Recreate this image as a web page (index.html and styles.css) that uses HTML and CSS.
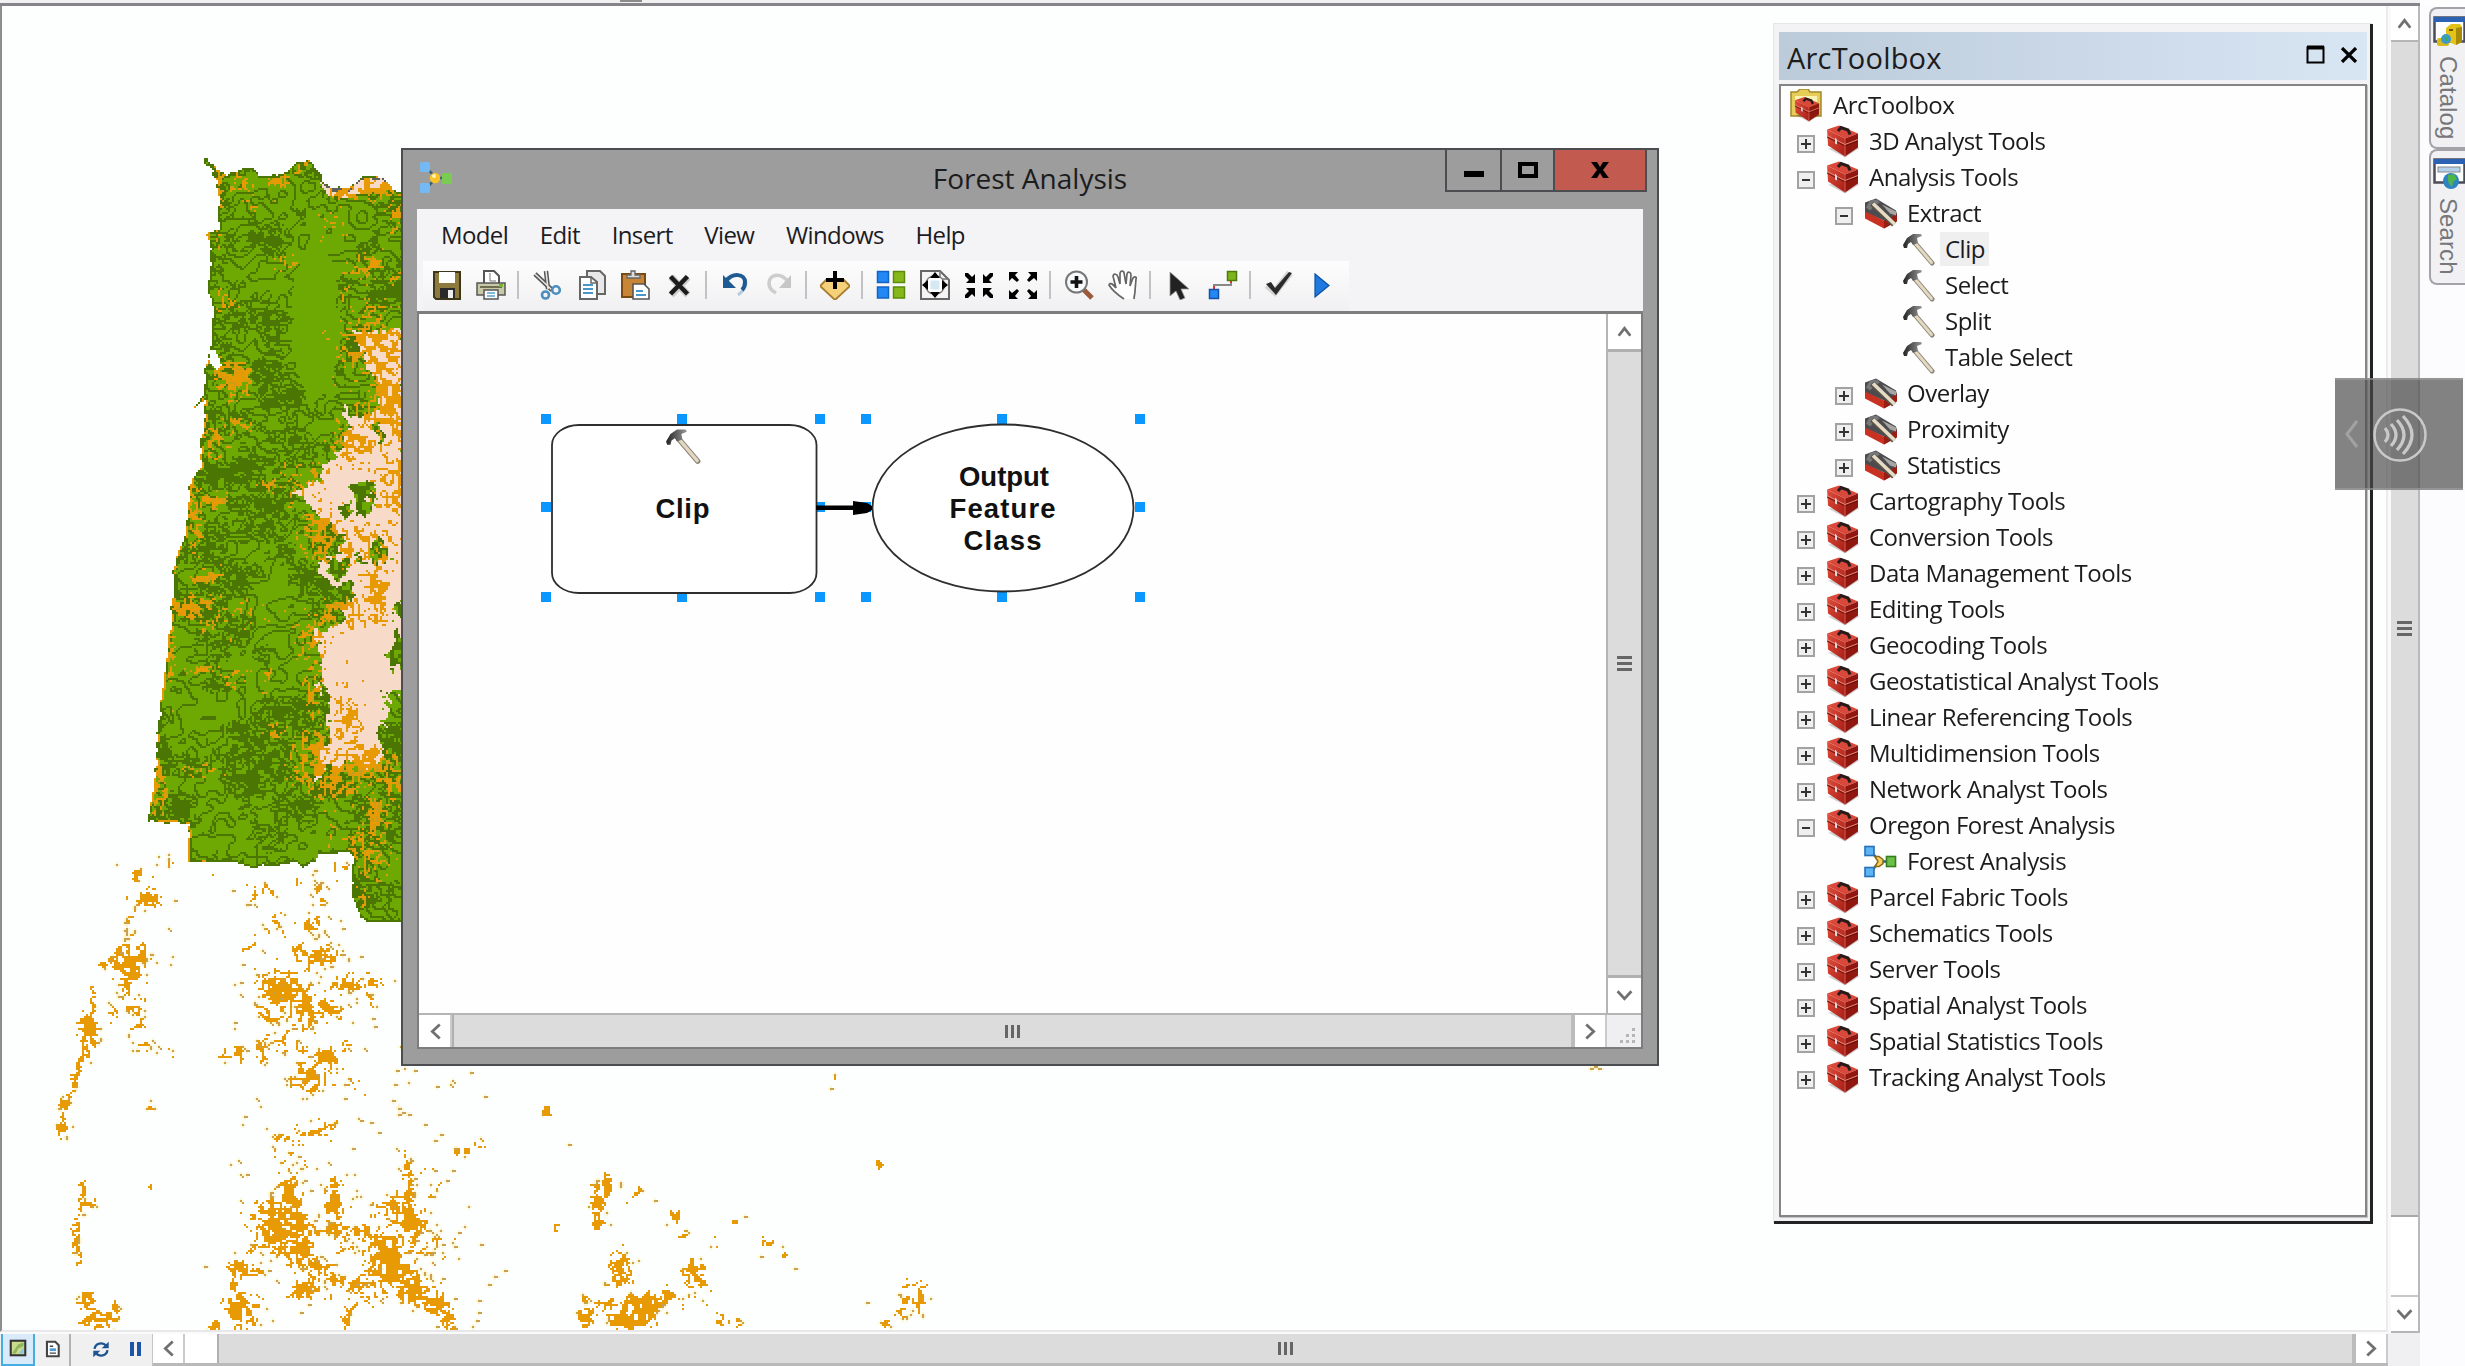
FILE: index.html
```html
<!DOCTYPE html>
<html lang="en">
<head>
<meta charset="utf-8">
<title>Forest Analysis</title>
<link rel="stylesheet" href="styles.css">
</head>
<body>
<svg class="defs" width="0" height="0" aria-hidden="true">
  <defs>
    <linearGradient id="gRed" x1="0" y1="0" x2="1" y2="1"><stop offset="0" stop-color="#e0503f"/><stop offset="1" stop-color="#a81c14"/></linearGradient>
    <linearGradient id="gSteel" x1="0" y1="0" x2="1" y2="0"><stop offset="0" stop-color="#222"/><stop offset="1" stop-color="#999"/></linearGradient>
    <symbol id="toolbox" viewBox="0 0 33 32">
      <path d="M2 23 19 32 33 23 31 20Z" fill="#000" opacity=".18"/>
      <path d="M1 4 13 0 32 8 19 13Z" fill="#d8493b"/>
      <path d="M1 4 19 13V31L2 20Z" fill="url(#gRed)"/>
      <path d="M32 8 19 13V31L32 22Z" fill="#8f1710"/>
      <path d="M1 10 19 19 32 14" fill="none" stroke="#e58a7c" stroke-width="1"/>
      <path d="M1 11.500 19 20.500 32 15.500" fill="none" stroke="#6a0f0a" stroke-width="1"/>
      <path d="M19 13V31" stroke="#d9705f" stroke-width=".8"/>
      <path d="M12 5.500 15 2 22 4.500 24 9" fill="none" stroke="#2a1a1a" stroke-width="3"/>
      <path d="M9 12v6l2 1v-5z" fill="#ddd"/>
    </symbol>
    <symbol id="toolset" viewBox="0 0 33 32">
      <path d="M1 13 20 23 33 16 32 24 20 31 1 21Z" fill="#c93223"/>
      <path d="M20 23 33 16V24L20 31Z" fill="#9a1c13"/>
      <path d="M1 14 1 5 12 1 32 13 33 17 20 23Z" fill="#4c4c4f"/>
      <path d="M18 7 32 14v4l-6-2z" fill="#a9a5a2"/>
      <path d="M2 10 6 3l7-1 3 3-4 2-6 6z" fill="#77777a"/>
      <path d="M8 6 30 27" stroke="#5a5248" stroke-width="5.500"/>
      <path d="M9 6 31 27" stroke="#e6dcc6" stroke-width="3.600"/>
    </symbol>
    <symbol id="hammer" viewBox="0 0 33 33">
      <path d="M13 10 30 30" stroke="#8b847c" stroke-width="5" stroke-linecap="round"/>
      <path d="M13 10 29.500 29.500" stroke="#e3d8bf" stroke-width="3" stroke-linecap="round"/>
      <path d="M1 12 5 5 11 1 19 1 20 3 15 5 16 10 11 12 9 9 6 11 5 15 2 15Z" fill="url(#gSteel)"/>
    </symbol>
    <symbol id="model" viewBox="0 0 33 32">
      <path d="M7 6 14 14M7 26 14 18M18 16h6" stroke="#236a80" stroke-width="2.500"/>
      <rect x="1" y="1" width="9" height="9" fill="#5db4f2" stroke="#2770b8" stroke-width="1.600"/>
      <rect x="1" y="22" width="9" height="9" fill="#5db4f2" stroke="#2770b8" stroke-width="1.600"/>
      <path d="M11 11h4l4 3v4l-4 3h-4l3-5z" fill="#f7cf5a" stroke="#8a6a1a" stroke-width="1.500"/>
      <rect x="22.500" y="11" width="9" height="10" fill="#6cc04a" stroke="#377d1c" stroke-width="1.600"/>
    </symbol>
    <symbol id="modelsoft" viewBox="0 0 33 32">
      <path d="M7 6 14 14M7 26 14 18M18 16h6" stroke="#3a6070" stroke-width="2.500"/>
      <rect x="0" y="0" width="10" height="10" rx="1.500" fill="#73b9f3"/>
      <rect x="0" y="21" width="10" height="10" rx="1.500" fill="#73b9f3"/>
      <circle cx="15" cy="16" r="5.200" fill="#f8c328"/>
      <circle cx="14" cy="14" r="2" fill="#fff3b8"/>
      <rect x="22" y="11" width="10" height="11" rx="1.500" fill="#7acb54"/>
    </symbol>
    <symbol id="up" viewBox="0 0 16 16"><path d="M2.500 12 8 5l5.500 7" fill="none" stroke="#707070" stroke-width="2.600"/></symbol>
    <symbol id="down" viewBox="0 0 16 16"><path d="M1.500 4 8 11l6.500-7" fill="none" stroke="#707070" stroke-width="2.600"/></symbol>
    <symbol id="left" viewBox="0 0 16 16"><path d="M12 1.500 5 8l7 6.500" fill="none" stroke="#707070" stroke-width="2.600"/></symbol>
    <symbol id="right" viewBox="0 0 16 16"><path d="M4 1.500 11 8l-7 6.500" fill="none" stroke="#707070" stroke-width="2.600"/></symbol>
  </defs>
</svg>

<div class="app">
  <div class="topstrip"><span class="topmark"></span></div>
  <div class="workspace">
    <div class="mapcol">
      <main class="mapview">
        <canvas id="map" class="map" width="1193" height="663"></canvas>
      </main>
      <footer class="statusbar">
        <div class="viewbtn viewbtn-on"><svg width="18" height="18" viewBox="0 0 26 26"><rect x="2.500" y="2.500" width="21" height="21" fill="#c9dc8c" stroke="#333" stroke-width="3"/><path d="M5 20 13 8l8-3v5l-8 4-3 7H5z" fill="#8fb65a"/><path d="M14 21 21 12v9z" fill="#8cc5e8"/></svg></div>
        <div class="viewbtn"><svg width="17" height="18" viewBox="0 0 24 26"><path d="M4 2.500h12l5 5v16H4z" fill="#fff" stroke="#444" stroke-width="3"/><path d="M8 9h5M8 19h9" stroke="#444" stroke-width="2"/><rect x="8" y="12" width="9" height="4" fill="#4a9bd8"/></svg></div>
        <span class="statusline"></span>
        <div class="drawbtn"><svg width="18" height="17" viewBox="0 0 28 26"><path d="M4 12C5 3 17 1 22 7M24 14C23 23 11 25 6 19" fill="none" stroke="#1d5590" stroke-width="3.600"/><path d="M26 1v10H15zM2 25v-10h11z" fill="#1d5590"/></svg></div>
        <div class="drawbtn"><svg width="13" height="14" viewBox="0 0 13 14"><path d="M1 0h4v14H1zM8 0h4v14H8z" fill="#1c55a8"/></svg></div>
        <div class="hscroll hscroll-main">
          <div class="sbtn"><svg class="chev"><use href="#left"/></svg></div>
          <div class="track"></div>
          <div class="thumb"><span class="grip grip-h"></span></div>
          <div class="sbtn"><svg class="chev"><use href="#right"/></svg></div>
        </div>
      </footer>
    </div>
    <div class="vscroll vscroll-main">
      <div class="sbtn"><svg class="chev"><use href="#up"/></svg></div>
      <div class="thumb"><span class="grip grip-v"></span></div>
      <div class="track"></div>
      <div class="sbtn"><svg class="chev"><use href="#down"/></svg></div>
      <div class="corner"></div>
    </div>
    <aside class="dock">
      <div class="tab tab-catalog">
        <svg width="32" height="32" viewBox="0 0 32 32"><rect x="1.500" y="1.500" width="30" height="24" fill="#fff" stroke="#4a4d58" stroke-width="2.500"/><path d="M1 1h31v5H1z" fill="#2c62b4"/><path d="M13 12 18 8h9l2 3v15l-6 3-10-4z" fill="#e3c31a"/><path d="M23 12v17l6-3V11z" fill="#a88a08"/><path d="M16 14h4" stroke="#6a5600" stroke-width="2"/><rect x="4" y="22" width="12" height="8" rx="2" fill="#d8ba18"/><circle cx="13" cy="23" r="5" fill="#3d9ad0"/><path d="M11 20l4 2-2 4z" fill="#3fae49"/></svg>
        <span>Catalog</span>
      </div>
      <div class="tab tab-search">
        <svg width="32" height="32" viewBox="0 0 32 32"><rect x="1.500" y="1.500" width="30" height="23" fill="#fff" stroke="#4a4d58" stroke-width="2.500"/><path d="M1 1h31v5H1z" fill="#2c62b4"/><rect x="5" y="9" width="22" height="5" fill="#b5d0ea" stroke="#888" stroke-width="1"/><circle cx="18" cy="23" r="8" fill="#2e83c4"/><path d="M15 17l6-1 3 5-4 3-1 5-3-3-1-4z" fill="#4fb548"/></svg>
        <span>Search</span>
      </div>
    </aside>
  </div>

  <section class="window">
    <header class="titlebar">
      <svg class="appicon" width="33" height="32"><use href="#modelsoft"/></svg>
      <h1>Forest Analysis</h1>
      <div class="winbtns">
        <div class="wb wb-min"><svg width="20" height="16" viewBox="0 0 20 16"><path d="M0 9h20v6H0z"/></svg></div>
        <div class="wb wb-max"><svg width="20" height="16" viewBox="0 0 20 16"><path d="M2 2h16v12H2z" fill="none" stroke="#000" stroke-width="4"/></svg></div>
        <div class="wb wb-close"><svg width="18" height="16" viewBox="0 0 18 16"><path d="M0 0h6l3 5 3-5h6l-6 8 6 8h-6l-3-5-3 5H0l6-8z"/></svg></div>
      </div>
    </header>
    <div class="client">
      <nav class="menu">
        <span>Model</span><span>Edit</span><span>Insert</span><span>View</span><span>Windows</span><span>Help</span>
      </nav>
      <div class="toolbar">
        <div class="group">
          <svg viewBox="0 0 30 30"><path d="M2 2h26v27H4l-2-2z" fill="#8c7b3c" stroke="#3e3618" stroke-width="2"/><path d="M7 2h16v11H7z" fill="#fff"/><path d="M8 18h15v10H8z" fill="#2a2a2a"/><path d="M16 20h5v8h-5z" fill="#eee"/></svg>
          <svg viewBox="0 0 30 30"><path d="M8 13V1h10l5 5v7" fill="#fff" stroke="#555" stroke-width="2"/><path d="M14 3v8h6" fill="none" stroke="#777"/><path d="M1 13h28v12H1z" fill="#c9c9a8" stroke="#555" stroke-width="1.500"/><path d="M4 17h22" stroke="#6e6e50" stroke-width="2"/><path d="M23 14h4v3h-4z" fill="#73b82a"/><path d="M8 20h14v9H8z" fill="#fff" stroke="#555" stroke-width="1.500"/><path d="M11 23h8M11 26h8" stroke="#5aa2cf" stroke-width="1.500"/></svg>
        </div>
        <i></i>
        <div class="group">
          <svg viewBox="0 0 30 30"><path d="M3 4 20 20M14 1l2 18" stroke="#555" stroke-width="4.500"/><path d="M3 4 20 20M14 1l2 18" stroke="#e4e4e4" stroke-width="1.600"/><circle cx="13.500" cy="25" r="3.500" fill="none" stroke="#4b8fc0" stroke-width="2.600"/><circle cx="24" cy="20" r="3.800" fill="none" stroke="#4b8fc0" stroke-width="2.600"/></svg>
          <svg class="copy" viewBox="0 0 30 30"><path d="M9 1h13l5 5v18H9z" fill="#e8e8e8" stroke="#666" stroke-width="2"/><path d="M2 7h11l6 5v17H2z" fill="#fff" stroke="#666" stroke-width="2"/><path d="M5 15h10M5 19h10M5 23h10" stroke="#4a96c8" stroke-width="2"/><path d="M13 7v6h6" fill="none" stroke="#666" stroke-width="1.500"/></svg>
          <svg viewBox="0 0 30 30"><path d="M2 4h23v23H2z" fill="#c98536" stroke="#7a4a12" stroke-width="2"/><path d="M7 8V5h4V1h4v4h5v3z" fill="#ddd" stroke="#666" stroke-width="1.300"/><path d="M13 14h11l5 5v10H13z" fill="#fff" stroke="#555" stroke-width="1.600"/><path d="M16 21h7M16 25h10" stroke="#4a96c8" stroke-width="2"/></svg>
          <svg viewBox="0 0 30 30"><path d="M7 7 24 25M24 7 7 25" stroke="#ccc" stroke-width="7"/><path d="M6.500 6.500 23.500 24M23.500 6.500 6.500 24" stroke="#1b1b1b" stroke-width="4.500"/></svg>
        </div>
        <i></i>
        <div class="group">
          <svg viewBox="0 0 30 30"><path d="M6 12C13 2 26 4 26 13c0 5-4 9-8 12" fill="none" stroke="#b8cbe0" stroke-width="3"/><path d="M6 11C13 2 25 4 25 12c0 3-1 6-3 8" fill="none" stroke="#1f5b92" stroke-width="4"/><path d="M3 5v13h13z" fill="#1f5b92"/></svg>
          <svg viewBox="0 0 30 30"><path d="M24 12C17 2 5 4 5 13c0 4 3 8 7 10" fill="none" stroke="#cdcdcd" stroke-width="3.600"/><path d="M27 5v13H15z" fill="#c6c6c6"/></svg>
        </div>
        <i></i>
        <div class="group">
          <svg viewBox="0 0 30 30"><path d="M0 16 6 10h18l6 6-15 14z" fill="#f5d27a" stroke="#a97d2e" stroke-width="1.800"/><path d="M15 1v18M6 10h18" stroke="#000" stroke-width="4"/></svg>
        </div>
        <i></i>
        <div class="group">
          <svg viewBox="0 0 30 30"><path d="M1.500 1.500h11v11h-11zM1.500 17h11v11h-11z" fill="#2288f5" stroke="#1463c4" stroke-width="1.500"/><path d="M17.500 1.500h11v11h-11zM17.500 17h11v11h-11z" fill="#86b81c" stroke="#5c8a0a" stroke-width="1.500"/></svg>
          <svg viewBox="0 0 30 30"><path d="M1 1h19l9 9v19H1z" fill="#f4f4f4" stroke="#666" stroke-width="2"/><path d="M20 1v8h9" fill="none" stroke="#777" stroke-width="1.500"/><circle cx="15" cy="15" r="9.500" fill="#fff" stroke="#777" stroke-width="1.200"/><path d="M10.500 10.500h9v9h-9z" fill="#d5e8f4"/><path d="M15 2l5 6H10zM15 28l5-6H10zM2 15l6-5v10zM28 15l-6-5v10z"/></svg>
          <svg viewBox="0 0 30 30"><path d="M1 3h3l4 4 3-3v9H2l3-3-4-4zM29 3h-3l-4 4-3-3v9h9l-3-3 4-4zM1 28h3l4-4 3 3v-9H2l3 3-4 4zM29 28h-3l-4-4-3 3v-9h9l-3 3 4 4z"/></svg>
          <svg viewBox="0 0 30 30"><path d="M1 2h9L7 5l4 5-2 2-5-4-3 3zM29 2h-9l3 3-4 5 2 2 5-4 3 3zM1 29h9l-3-3 4-5-2-2-5 4-3-3zM29 29h-9l3-3-4-5 2-2 5 4 3-3z"/></svg>
        </div>
        <i></i>
        <div class="group">
          <svg viewBox="0 0 30 30"><path d="M19 19 28 28" stroke="#9a5a3c" stroke-width="5"/><circle cx="12.500" cy="12" r="10.500" fill="#f7fafc" stroke="#777" stroke-width="2"/><path d="M12.500 6v12M6.500 12h12" stroke="#111" stroke-width="3.600"/></svg>
          <svg viewBox="0 0 30 30"><path d="M16 29C10 25 4 20 1 15c1-3 4-1 7 3L5 6c1-3 4-2 5 1l2 7V3c1-3 4-2 4 0l2 11 1-10c1-3 4-2 4 1l-1 11 3-8c2-2 4-1 3 1l-1 12c0 3-1 5-1 8" fill="#fff" stroke="#666" stroke-width="1.700"/></svg>
        </div>
        <i></i>
        <div class="group">
          <svg viewBox="0 0 30 30"><path d="M6 2v24l6-5 4 9 5-2-4-9h8z" fill="#222" stroke="#999" stroke-width=".8"/></svg>
          <svg viewBox="0 0 30 30"><path d="M6 20v-5h17v-6" fill="none" stroke="#888" stroke-width="2"/><path d="M6 20v-4M23 13V9" stroke="#d33" stroke-width="2"/><path d="M1.500 19.500h9v9h-9z" fill="#2288f5" stroke="#1450a8" stroke-width="1.500"/><path d="M19.500 1.500h9v9h-9z" fill="#7fb51c" stroke="#4d7a08" stroke-width="1.500"/></svg>
        </div>
        <i></i>
        <div class="group">
          <svg viewBox="0 0 30 30"><path d="M3 15 11 22 26 3" fill="none" stroke="#d4d4d4" stroke-width="7"/><path d="M2 14l5-2 4 6L25 2l3 1-16 22z" fill="#2b2b2b"/></svg>
          <svg viewBox="0 0 30 30"><path d="M7 4 21 15.500 7 27z" fill="#1e7ae0" stroke="#0c4fa0" stroke-width="1.200"/></svg>
        </div>
      </div>
      <div class="canvasbox">
        <div class="canvasmain">
          <svg class="diagram" width="1187" height="698" viewBox="419 314 1187 698">
            <g fill="#0a97ff">
              <path d="M541 414h10v10h-10zM677 414h10v10h-10zM815 414h10v10h-10zM541 502h10v10h-10zM815 502h10v10h-10zM541 592h10v10h-10zM677 592h10v10h-10zM815 592h10v10h-10z"/>
              <path d="M861 414h10v10h-10zM997 414h10v10h-10zM1135 414h10v10h-10zM861 502h10v10h-10zM1135 502h10v10h-10zM861 592h10v10h-10zM997 592h10v10h-10zM1135 592h10v10h-10z"/>
            </g>
            <rect x="552" y="425" width="264.500" height="168" rx="27" ry="20" fill="#fff" stroke="#2e2e2e" stroke-width="1.800"/>
            <ellipse cx="1003" cy="508" rx="130.500" ry="83.500" fill="#fff" stroke="#2e2e2e" stroke-width="1.800"/>
            <path d="M816 505.500h37V501l14 2 5 3v4l-5 3-14 2v-5h-37z"/>
            <use href="#hammer" x="665" y="428" width="36" height="37"/>
            <text x="682.500" y="518" textLength="54">Clip</text>
            <text x="1004" y="486" textLength="90">Output</text>
            <text x="1002.500" y="518" textLength="106">Feature</text>
            <text x="1002.500" y="550" textLength="78">Class</text>
          </svg>
          <div class="vscroll vscroll-win">
            <div class="sbtn"><svg class="chev"><use href="#up"/></svg></div>
            <div class="thumb"><span class="grip grip-v"></span></div>
            <div class="sbtn"><svg class="chev"><use href="#down"/></svg></div>
          </div>
        </div>
        <div class="canvasfoot">
          <div class="hscroll hscroll-win">
            <div class="sbtn"><svg class="chev"><use href="#left"/></svg></div>
            <div class="thumb"><span class="grip grip-h"></span></div>
            <div class="sbtn"><svg class="chev"><use href="#right"/></svg></div>
          </div>
          <div class="sizer"><svg width="16" height="16" viewBox="0 0 16 16" fill="#b5b5b8"><path d="M12 0h3v3h-3zM6 6h3v3H6zM12 6h3v3h-3zM0 12h3v3H0zM6 12h3v3H6zM12 12h3v3h-3z"/></svg></div>
        </div>
      </div>
    </div>
  </section>

  <section class="panel">
    <header class="panelhead">
      <h2>ArcToolbox</h2>
      <svg width="20" height="20" viewBox="0 0 20 20"><path d="M1.500 2.500h16v15h-16z" fill="none" stroke="#000" stroke-width="2"/><path d="M1 2.500h17" stroke="#000" stroke-width="4"/></svg>
      <svg width="18" height="16" viewBox="0 0 18 16"><path d="M2 1 16 15M16 1 2 15" stroke="#000" stroke-width="3.200"/></svg>
    </header>
    <ul class="tree">
      <li class="l0"><svg><path d="M1 3h6l3-3h8l2 3h11v24H1z" fill="#e6cd57" stroke="#a3882a" stroke-width="1.500"/><path d="M5 7h22v6H5z" fill="#fbf3b4"/><use href="#toolbox" x="4" y="8" width="26" height="25"/></svg><span>ArcToolbox</span></li>
      <li class="l1"><b class="plus"></b><svg><use href="#toolbox"/></svg><span>3D Analyst Tools</span></li>
      <li class="l1"><b></b><svg><use href="#toolbox"/></svg><span>Analysis Tools</span></li>
      <li class="l2"><b></b><svg><use href="#toolset"/></svg><span>Extract</span></li>
      <li class="l3"><svg><use href="#hammer"/></svg><span class="sel">Clip</span></li>
      <li class="l3"><svg><use href="#hammer"/></svg><span>Select</span></li>
      <li class="l3"><svg><use href="#hammer"/></svg><span>Split</span></li>
      <li class="l3"><svg><use href="#hammer"/></svg><span>Table Select</span></li>
      <li class="l2"><b class="plus"></b><svg><use href="#toolset"/></svg><span>Overlay</span></li>
      <li class="l2"><b class="plus"></b><svg><use href="#toolset"/></svg><span>Proximity</span></li>
      <li class="l2"><b class="plus"></b><svg><use href="#toolset"/></svg><span>Statistics</span></li>
      <li class="l1"><b class="plus"></b><svg><use href="#toolbox"/></svg><span>Cartography Tools</span></li>
      <li class="l1"><b class="plus"></b><svg><use href="#toolbox"/></svg><span>Conversion Tools</span></li>
      <li class="l1"><b class="plus"></b><svg><use href="#toolbox"/></svg><span>Data Management Tools</span></li>
      <li class="l1"><b class="plus"></b><svg><use href="#toolbox"/></svg><span>Editing Tools</span></li>
      <li class="l1"><b class="plus"></b><svg><use href="#toolbox"/></svg><span>Geocoding Tools</span></li>
      <li class="l1"><b class="plus"></b><svg><use href="#toolbox"/></svg><span>Geostatistical Analyst Tools</span></li>
      <li class="l1"><b class="plus"></b><svg><use href="#toolbox"/></svg><span>Linear Referencing Tools</span></li>
      <li class="l1"><b class="plus"></b><svg><use href="#toolbox"/></svg><span>Multidimension Tools</span></li>
      <li class="l1"><b class="plus"></b><svg><use href="#toolbox"/></svg><span>Network Analyst Tools</span></li>
      <li class="l1"><b></b><svg><use href="#toolbox"/></svg><span>Oregon Forest Analysis</span></li>
      <li class="l2 leaf"><svg><use href="#model"/></svg><span>Forest Analysis</span></li>
      <li class="l1"><b class="plus"></b><svg><use href="#toolbox"/></svg><span>Parcel Fabric Tools</span></li>
      <li class="l1"><b class="plus"></b><svg><use href="#toolbox"/></svg><span>Schematics Tools</span></li>
      <li class="l1"><b class="plus"></b><svg><use href="#toolbox"/></svg><span>Server Tools</span></li>
      <li class="l1"><b class="plus"></b><svg><use href="#toolbox"/></svg><span>Spatial Analyst Tools</span></li>
      <li class="l1"><b class="plus"></b><svg><use href="#toolbox"/></svg><span>Spatial Statistics Tools</span></li>
      <li class="l1"><b class="plus"></b><svg><use href="#toolbox"/></svg><span>Tracking Analyst Tools</span></li>
    </ul>
  </section>

  <div class="flyout">
    <svg width="128" height="112" viewBox="0 0 128 112" fill="none">
      <path d="M22 43 12 56l10 13" stroke="#a2a2a2" stroke-width="3"/>
      <circle cx="65" cy="57" r="25.500" stroke="#c9c9c9" stroke-width="2.500"/>
      <path d="M50 50q6 7 0 14M56 46q10 11 0 22M62 42q14 15 0 30M68 38q18 19 0 38" stroke="#c9c9c9" stroke-width="3.200"/>
    </svg>
  </div>
</div>
<script src="map.js"></script>
</body>
</html>
```
FILE: styles.css
```css
* { box-sizing: border-box; }
body { margin: 0; background: #fefefe; font-family: "Open Sans", "Noto Sans", sans-serif; color: #1c1c1e; overflow: hidden; }
h1, h2, ul { margin: 0; padding: 0; font-weight: 400; }
svg { display: block; flex: none; }
.defs { position: absolute; }

.app { position: relative; width: 2465px; height: 1366px; display: flex; flex-direction: column; overflow: hidden; }
.topstrip { height: 6px; width: 2420px; background: #f1f1f3; border-bottom: 3px solid #858589; }
.topmark { display: block; width: 22px; height: 2px; margin-left: 620px; background: #8b8b8b; }
.workspace { flex: 1; display: flex; min-height: 0; }
.mapcol { width: 2388px; display: flex; flex-direction: column; }
.mapview { flex: 1; min-height: 0; border-left: 2px solid #8d8d8d; border-right: 2px solid #ececf0; border-bottom: 2px solid #e8e8ea; background: #fdfefe; overflow: hidden; }
.map { display: block; width: 2386px; height: 1326px; image-rendering: pixelated; }

/* status bar */
.statusbar { height: 34px; display: flex; background: #f0f0f1; align-items: stretch; border-top: 2px solid #fafafa; }
.viewbtn, .drawbtn { display: flex; align-items: center; justify-content: center; padding-bottom: 2px; }
.viewbtn { width: 34px; }
.viewbtn-on { width: 34px; margin-left: 1px; background: #d9ebfb; border: 2px solid #45aee0; border-top: 0; }
.statusline { width: 2px; background: #b3b3b3; margin-right: 13px; }
.drawbtn { width: 34px; }
.hscroll { display: flex; align-items: stretch; }
.hscroll-main { flex: 1; border-bottom: 3px solid #b9b9b9; border-left: 1px solid #c6c6c6; }
.hscroll-main .track { width: 32px; background: #fff; }
.sbtn { background: #fff; display: flex; align-items: center; justify-content: center; flex: none; }
.hscroll .sbtn { width: 32px; border-right: 2px solid #cbcbcb; }
.chev { width: 17px; height: 17px; }
.thumb { flex: 1; background: #dcdcdc; display: flex; align-items: center; justify-content: center; }
.hscroll .thumb { border-left: 2px solid #b0b0b0; border-right: 4px solid #bcbcbc; }
.grip-h { width: 16px; height: 13px; background: repeating-linear-gradient(90deg, #666 0 3px, transparent 3px 6px); }
.grip-v { width: 15px; height: 15px; background: repeating-linear-gradient(#666 0 3px, transparent 3px 6px); }

/* main vertical scroll */
.vscroll { display: flex; flex-direction: column; }
.vscroll-main { width: 32px; padding-left: 3px; border-right: 2px solid #b9b9b9; background: #fafafa; }
.vscroll-main .sbtn { height: 36px; border-bottom: 2px solid #b5b5b5; }
.vscroll-main .thumb { border-bottom: 2px solid #a8a8a8; }
.vscroll-main .track { height: 80px; background: #fff; border-bottom: 2px solid #c8c8c8; }
.corner { height: 33px; background: #f0f0f2; margin: 0 -2px 0 -3px; }

/* dock tabs */
.dock { flex: 1; background: #fcfcfe; padding: 1px 0 0 9px; }
.tab { height: 142px; border: 2px solid #a3a3a8; border-right: 0; border-radius: 8px 0 0 8px; background: #f1f1f3; padding: 7px 0 0 2px; display: flex; flex-direction: column; gap: 8px; }
.tab-search { height: 136px; }
.tab span { writing-mode: vertical-rl; width: 30px; line-height: 30px; font-family: "Liberation Sans", sans-serif; font-size: 24px; color: #77777b; letter-spacing: .1px; }

/* model window */
.window { position: absolute; left: 401px; top: 148px; width: 1258px; height: 918px; background: #9d9d9d; border: 2px solid #4b4d50; padding: 0 14px 15px 14px; display: flex; flex-direction: column; }
.titlebar { height: 59px; display: flex; align-items: flex-start; }
.appicon { margin: 12px 0 0 3px; }
.titlebar h1 { flex: 1; font-size: 28px; line-height: 38px; padding-top: 9px; text-align: center; padding-left: 344px; letter-spacing: 0; }
.winbtns { display: flex; width: 202px; height: 42px; border: 2px solid #4b4d50; border-top: 0; margin-right: -4px; margin-left: 182px; }
.wb { display: flex; align-items: center; justify-content: center; }
.wb-min { width: 55px; border-right: 2px solid #4b4d50; }
.wb-max { width: 53px; border-right: 2px solid #4b4d50; }
.wb-close { flex: 1; background: #c25a50; }
.client { flex: 1; min-height: 0; display: flex; flex-direction: column; background: #f4f3f6; }
.menu { height: 52px; display: flex; gap: 31.7px; padding-left: 24px; font-size: 24px; line-height: 52px; letter-spacing: -.62px; }
.toolbar { height: 50px; width: 926px; margin-left: 6px; padding: 0 0 3px 9px; display: flex; align-items: center; background: linear-gradient(#fdfdfd, #f0f0f2); }
.group { display: flex; gap: 14px; }
.group svg { width: 30px; height: 30px; }
.group .copy { margin: 0 -2px 0 2px; }
.toolbar i { width: 2px; height: 28px; margin: 0 13px 0 11px; background: #c2c2c6; flex: none; }
.canvasbox { flex: 1; min-height: 0; display: flex; flex-direction: column; border: 2px solid #7e7c7e; border-top-width: 3px; background: #fefefe; }
.canvasmain { flex: 1; min-height: 0; display: flex; justify-content: space-between; }
.diagram text { font: 700 27.5px "Liberation Sans", Arial, sans-serif; text-anchor: middle; fill: #111; }
.vscroll-win { width: 35px; border-left: 2px solid #b5b5b5; }
.vscroll-win .sbtn { height: 35px; }
.vscroll-win .thumb { border: solid #b0b0b0; border-width: 3px 0; }
.canvasfoot { height: 34px; display: flex; border-top: 2px solid #b5b5b5; }
.hscroll-win { flex: 1; padding-left: 1px; }
.sizer { width: 34px; background: #efeef1; display: flex; align-items: flex-end; justify-content: flex-end; padding: 0 5px 3px 0; }

/* toolbox panel */
.panel { position: absolute; left: 1774px; top: 24px; width: 599px; height: 1200px; background: #f3f3f5; border: solid #222; border-width: 0 3px 3px 0; padding: 8px 3px 4px 5px; display: flex; flex-direction: column; gap: 4px; box-shadow: -1px -1px 0 #e6e6ea; }
.panelhead { height: 48px; display: flex; align-items: center; background: linear-gradient(90deg, #bccbda, #d8e6f4); padding: 0 9px 0 8px; }
.panelhead h2 { flex: 1; font-size: 29px; line-height: 46px; padding-top: 3px; letter-spacing: .2px; }
.panelhead svg { margin-left: 14px; margin-bottom: 2px; }
.tree { flex: 1; list-style: none; background: #fefefe; border: 2px solid #858585; padding-top: 1px; box-shadow: 1px 1px 0 #c4c4c4; }
.tree li { height: 36px; display: flex; align-items: center; font-size: 24px; letter-spacing: -.5px; }
.tree svg { width: 33px; height: 33px; margin-right: 10px; }
.tree span { line-height: 34px; white-space: nowrap; }
.tree b { position: relative; width: 18px; height: 18px; margin: 6px 11px 0 0; border: 2px solid #a2a2a2; background: linear-gradient(#333, #333) center / 8px 2px no-repeat #efefef; }
.tree .plus { background: linear-gradient(#333, #333) center / 10px 2px no-repeat, linear-gradient(#333, #333) center / 2px 10px no-repeat #efefef; }
.l0 { padding-left: 9px; }
.l1 { padding-left: 16px; }
.l2 { padding-left: 54px; }
.l2.leaf { padding-left: 83px; }
.l3 { padding-left: 121px; }
.tree .sel { background: #f0eff0; margin-left: -5px; padding: 0 4px 0 5px; }

.flyout { position: absolute; left: 2335px; top: 378px; width: 128px; height: 112px; background: rgba(75, 75, 75, .69); border: solid rgba(160, 160, 160, .6); border-width: 2px 0; }
.flyout svg { margin-top: -2px; }
```
FILE: map.js
```js
// Draws the forest raster: one canvas pixel is a 2x2 screen cell.
(function () {
  var cv = document.getElementById('map'), ctx = cv.getContext('2d');
  var W = cv.width, H = cv.height, OX = 2, OY = 6;
  var img = ctx.createImageData(W, H), d = img.data;

  function hash(x, y, s) {
    var n = Math.imul(x, 374761393) + Math.imul(y, 668265263) + Math.imul(s, 1274126177);
    n = Math.imul(n ^ (n >>> 13), 1274126177);
    return ((n ^ (n >>> 16)) >>> 0) / 4294967296;
  }
  function noise(x, y, s) {
    var xi = Math.floor(x), yi = Math.floor(y), fx = x - xi, fy = y - yi;
    fx = fx * fx * (3 - 2 * fx); fy = fy * fy * (3 - 2 * fy);
    var a = hash(xi, yi, s), b = hash(xi + 1, yi, s), c = hash(xi, yi + 1, s), e = hash(xi + 1, yi + 1, s);
    return (a + (b - a) * fx) * (1 - fy) + (c + (e - c) * fx) * fy;
  }
  function fbm(x, y, s) { return noise(x, y, s) * .5 + noise(x * 2, y * 2, s + 1) * .28 + noise(x * 4, y * 4, s + 2) * .22; }
  function poly(p) {
    var q = new Path2D();
    for (var i = 0; i < p.length; i += 2) { if (i) q.lineTo(p[i], p[i + 1]); else q.moveTo(p[i], p[i + 1]); }
    q.closePath(); return q;
  }
  function put(i, j, c) {
    if (i < 0 || j < 0 || i >= W || j >= H) return;
    var k = (j * W + i) * 4; d[k] = c[0]; d[k + 1] = c[1]; d[k + 2] = c[2]; d[k + 3] = 255;
  }
  var GREEN = [110, 168, 2], DARK = [76, 118, 4], ORANGE = [232, 154, 4], OCHRE = [203, 158, 22],
      PINK = [247, 218, 200], TAN = [200, 160, 80], PALE = [254, 246, 208], GREY = [95, 95, 95];

  var coast = poly([201,157,207,158,212,164,228,175,236,170,252,166,254,165,258,175,278,175,288,170,296,161,308,160,318,171,319,180,330,187,348,187,362,177,370,175,380,176,394,189,404,192,404,921,374,920,358,919,357,902,352,901,353,852,317,852,316,860,302,866,292,861,270,866,262,862,250,867,235,861,187,861,189,824,183,822,146,821,150,800,155,765,160,700,166,660,172,600,173,560,183,540,185,525,190,480,199,465,203,420,204,400,195,407,203,395,204,385,203,367,208,360,211,340,212,300,206,290,209,270,210,248,206,237,208,230,217,228,219,195,212,170]);
  var lake = poly([210,350,215,350,221,365,216,368,210,362]);
  var valley = poly([352,332,375,326,404,334,404,690,390,692,382,700,382,718,373,735,378,755,368,772,345,760,318,780,313,768,322,750,325,715,327,700,313,682,322,672,320,660,318,632,340,615,350,600,350,588,325,580,315,565,330,560,350,545,330,528,315,512,298,497,295,485,315,480,328,460,342,452,347,440,344,418,340,398,352,408,372,414,378,400,370,372,362,350]);
  var woods = [[361,497,8,18],[345,509,5,6],[396,650,5,20],[360,562,7,5],[338,568,7,9],[380,430,5,8],[400,610,5,10],[378,550,8,10],[345,595,9,12]];
  var rim = poly([318,181,330,187,348,187,362,177,380,176,394,189,385,190,360,192,345,197,328,195]);
  // x, y, rx, ry, strength
  var land = [[218,185,4,45,.8],[275,180,14,6,.85],[240,182,14,12,.65],[300,165,10,7,.6],[385,190,25,14,.7],[345,193,20,6,.7],[255,198,14,12,.45],[395,215,12,22,.6],[332,225,14,16,.45],[285,262,14,10,.45],[365,265,18,12,.65],[345,285,12,20,.4],[225,300,12,12,.6],[233,376,17,14,1],[230,400,10,18,.5],[235,425,16,8,.6],[215,440,12,18,.6],[395,277,8,6,.6],[375,345,34,40,.7],[390,400,26,40,.78],[350,440,22,18,.6],[300,480,24,20,.5],[395,480,20,40,.62],[270,485,14,9,.65],[210,500,18,8,.65],[195,520,6,30,.85],[320,530,16,24,.85],[290,500,10,30,.3],[360,545,30,20,.62],[205,575,16,10,.65],[195,608,22,12,.72],[240,612,50,14,.36],[310,640,14,22,.66],[345,612,22,14,.75],[375,590,12,30,.62],[170,660,4,40,.6],[200,668,26,5,.5],[240,675,22,14,.42],[265,680,10,14,.55],[312,690,12,28,.56],[345,725,14,36,.56],[275,730,16,8,.55],[310,755,20,28,.7],[335,780,28,20,.7],[360,765,32,16,.88],[395,780,14,20,.72],[158,785,7,22,.9],[205,770,20,10,.45],[376,815,12,18,.8],[370,850,22,30,.6],[330,830,8,20,.42],[362,890,8,20,.5],[385,860,18,12,.4],[360,440,18,14,.75],[400,450,10,30,.7],[210,620,30,12,.4]];
  var south = [[157,860,20,8,.28],[138,873,7,5,.6],[145,898,9,9,.8],[130,920,6,26,.5],[142,915,14,14,.22],[215,880,26,5,.3],[265,891,12,8,.6],[243,888,5,4,.4],[300,882,18,6,.4],[338,868,14,8,.4],[318,905,7,26,.55],[274,925,12,14,.35],[310,925,12,8,.5],[130,962,14,16,.95],[150,960,10,12,.4],[118,950,8,6,.7],[125,985,7,14,.55],[135,1015,10,18,.6],[118,1015,12,20,.3],[142,1043,8,12,.6],[165,1050,14,14,.2],[88,1027,8,14,1],[84,1050,6,14,.6],[63,1127,5,6,1.1],[63,1102,5,5,.8],[72,1082,5,6,.6],[320,955,20,8,.85],[300,953,8,8,.8],[283,990,18,16,1],[300,1002,14,24,.8],[270,1010,16,18,.5],[345,983,30,7,.6],[320,1008,18,10,.7],[365,1000,14,14,.3],[285,1040,12,18,.5],[300,1046,14,10,.5],[262,1048,8,14,.6],[232,1054,11,9,.7],[250,1000,16,30,.15],[308,1078,15,12,.9],[325,1060,14,12,.65],[340,1045,10,14,.4],[355,1085,28,10,.25],[283,1140,12,5,.7],[315,1130,18,7,.6],[285,1160,22,14,.35],[287,1190,9,10,1],[283,1225,22,22,1.05],[298,1248,12,14,1],[265,1215,10,16,.6],[333,1200,7,16,.85],[345,1195,14,10,.35],[335,1228,14,8,.5],[378,1210,12,10,.6],[395,1203,10,8,1.1],[407,1200,5,30,.9],[420,1170,14,8,.3],[432,1195,12,10,.35],[410,1225,14,14,.85],[390,1262,20,26,.85],[385,1275,12,10,1],[412,1288,14,12,1.1],[432,1303,12,9,1],[446,1318,6,10,.8],[425,1240,22,16,.4],[345,1240,18,14,.4],[365,1232,14,8,.7],[318,1265,12,10,.7],[335,1280,12,6,.6],[305,1288,12,9,.85],[355,1285,8,8,.7],[372,1295,8,7,.6],[345,1315,5,14,.5],[328,1290,8,10,.4],[240,1268,12,8,.9],[258,1270,8,6,.6],[235,1302,8,16,1.05],[247,1310,12,12,.7],[215,1326,6,5,1],[238,1328,5,4,.8],[82,1188,3,18,.5],[84,1205,10,8,.5],[74,1230,4,20,.7],[75,1262,4,12,.5],[86,1300,6,7,1],[98,1320,12,7,1],[114,1312,4,9,.8],[455,1318,34,16,.12],[445,1240,40,40,.08],[597,1202,6,14,1],[606,1184,4,10,.9],[597,1222,8,8,.6],[632,1188,9,8,.7],[675,1216,6,6,.9],[681,1234,6,5,.7],[693,1268,8,8,1],[695,1282,9,5,.8],[619,1265,10,14,.7],[618,1282,12,8,.7],[642,1302,14,8,1.1],[632,1318,20,12,.8],[605,1304,14,6,.6],[587,1317,8,10,1.05],[585,1298,7,5,.5],[668,1295,14,9,.6],[692,1298,14,10,.45],[680,1312,14,6,.3],[722,1318,6,7,.8],[737,1324,4,8,.6],[768,1243,8,5,.7],[782,1252,6,6,.6],[905,1298,4,14,.8],[919,1298,7,12,.8],[899,1308,6,5,1],[886,1322,6,8,.5],[547,1110,5,4,1],[461,1151,8,3,.8],[479,1143,5,3,.9],[555,1226,3,4,.9],[878,1163,3,3,.9],[835,1077,9,2,.8],[731,1220,4,3,.7],[712,1243,6,5,.5],[150,1106,3,4,.9],[149,1187,4,3,.5]];
  var roads = [[96,965,105,964,120,945,130,950],[91,988,93,1005,88,1025,83,1050,78,1068,75,1083,66,1102,62,1120],[125,975,124,992],[335,984,360,985,378,976],[320,1007,343,1010],[368,990,372,1005],[262,1046,262,1062],[305,1082,316,1060,330,1050],[300,1133,320,1129,335,1119],[334,1185,335,1235],[308,1230,330,1233,348,1229,368,1233,385,1245],[338,1250,345,1233],[404,1150,408,1175,408,1215],[385,1272,410,1290,430,1300,446,1315,451,1330],[300,1247,318,1268,340,1282],[312,1262,310,1298],[358,1290,370,1265,380,1250],[356,1295,370,1304],[353,1303,345,1328],[248,1250,262,1242],[232,1290,236,1270,245,1258],[82,1180,80,1195,75,1215,74,1240,76,1262],[592,1187,593,1212],[605,1180,604,1195],[612,1262,622,1280,628,1280,627,1262,617,1250],[598,1303,640,1300,655,1304],[660,1300,666,1290],[240,950,255,945],[272,915,282,935]];

  function density(list, x, y, reach) {
    var m = 0;
    for (var i = 0; i < list.length; i++) {
      var b = list[i], u = (x - b[0]) / b[2], v = (y - b[1]) / b[3], q = u * u + v * v;
      if (q < 4.5) { var w = b[4] * Math.exp(-q * reach); if (w > m) m = w; }
    }
    return m;
  }
  function burnt(i, j, m) {
    // vein-like speckle that fills in as the density rises
    var r = Math.abs(noise(i / 2.8, j / 2.8, 41) - .5) * 2, g = hash(i, j, 47) * .3 + noise(i / 1.7, j / 1.7, 48) * .7;
    return r * .65 + g * .35 < m * .66;
  }
  function inside(p, x, y) { return ctx.isPointInPath(p, x, y); }
  function grove(x, y) {
    return woods.some(function (g) { var u = (x - g[0]) / g[2], v = (y - g[1]) / g[3]; return u * u + v * v < 1; });
  }
  // one-cell-wide isolines of a noise field
  function contour(i, j, sx, sy, seed, levels) {
    var a = Math.floor(fbm(i / sx, j / sy, seed) * levels);
    return a !== Math.floor(fbm((i + 1) / sx, j / sy, seed) * levels) || a !== Math.floor(fbm(i / sx, (j + 1) / sy, seed) * levels);
  }

  for (var j = 70; j < H; j++) for (var i = 10; i < 320; i++) {
    var x = i * 2 + OX, y = j * 2 + OY;
    var jx = x + (noise(i / 3, j / 3, 5) - .5) * 4, jy = y + (noise(i / 3, j / 3, 6) - .5) * 3;
    if (x < 404 && inside(coast, jx, jy) && !inside(lake, x, y)) {
      var wx = x + (fbm(i / 6, j / 6, 8) - .5) * 26, wy = y + (fbm(i / 6, j / 6, 9) - .5) * 26;
      var c = GREEN, pink = inside(valley, wx, wy) || inside(rim, x, y);
      var clear = Math.exp(-Math.pow((x - 315) / 28, 2) - Math.pow((y - 320) / 85, 2));
      var m = noise(i / 15, j / 13, 30) * .75 + noise(i / 6, j / 6, 31) * .25 - clear * .7 - (y > 620 ? .1 : 0);
      if (clear < .45 && contour(i, j, 20, 15, 20, 6)) c = DARK;
      if (m > .4 && contour(i, j, 9, 6.5, 50, 6)) c = DARK;
      if (m > .5 && noise(i / 3.4, j / 2.6, 54) < .3 + (m - .5) * .9) c = DARK;
      if (pink) c = PINK;
      if (grove(wx, wy)) c = hash(i >> 1, j >> 1, 12) > .4 ? DARK : GREEN;
      var dn = density(land, x, y, .6);
      if (burnt(i, j, c === PINK ? dn + .06 : dn * .92)) c = hash(i, j, 3) > .72 && c !== PINK ? OCHRE : ORANGE;
      var edge = !inside(coast, jx - 2.4, jy) || !inside(coast, jx, jy - 2.4) || !inside(coast, jx, jy + 2.4);
      if (edge && c !== ORANGE) c = c === PINK ? GREY : (x < 210 && hash(i >> 1, j >> 2, 4) > .6 ? ORANGE : DARK);
      put(i, j, c);
    }
  }
  function onLand(x, y) { return x < 408 && y < 924 && inside(coast, x, y); }
  function pale(i, j) {
    [[1, 0], [-1, 0], [0, 1], [0, -1]].forEach(function (o) {
      if (j + o[1] < H && !d[((j + o[1]) * W + i + o[0]) * 4 + 3]) put(i + o[0], j + o[1], PALE);
    });
  }
  for (j = 423; j < H; j++) for (i = 15; i < 470; i++) {
    x = i * 2 + OX; y = j * 2 + OY;
    if (onLand(x, y)) continue;
    var s = density(south, x, y, .5);
    if (s < .04) continue;
    if (burnt(i, j, s * .9 + .04)) {
      if (s < .4 && hash(i >> 2, j >> 2, 90) > .45) {
        if (hash(i, j, 91) > .35) { put(i, j, TAN); pale(i, j); }
      } else put(i, j, ORANGE);
    }
  }
  // stray tan cells around the southern clusters
  for (j = 425; j < H - 2; j++) for (i = 55; i < 240; i++) {
    x = i * 2 + OX; y = j * 2 + OY;
    if (onLand(x, y) || hash(i, j, 95) < .994) continue;
    if (x < 230 && (y > 1060 || x > 175)) continue;
    put(i, j, TAN); if (hash(i, j, 96) > .4) put(i + 1, j + (hash(i, j, 97) > .5 ? 1 : 0), TAN);
    pale(i, j);
  }
  roads.forEach(function (r, n) {
    for (var k = 0; k + 3 < r.length; k += 2) {
      var L = Math.hypot(r[k + 2] - r[k], r[k + 3] - r[k + 1]), st = Math.ceil(L / 1.6);
      for (var t = 0; t <= st; t++) {
        var px = r[k] + (r[k + 2] - r[k]) * t / st, py = r[k + 1] + (r[k + 3] - r[k + 1]) * t / st;
        var a = Math.round((px - OX) / 2 + (noise(t / 3, n, 60) - .5) * 3), b = Math.round((py - OY) / 2 + (noise(t / 3, n, 61) - .5) * 3);
        if (hash(t, n, 63) > .12) put(a, b, ORANGE);
        if (hash(t, n, 62) > .65) put(a + 1, b, ORANGE);
      }
    }
  });
  // isolated cells
  [[204,1266],[395,1085],[408,1115],[485,1097],[568,1144],[654,1200],[744,1217],[761,1256],[794,1268],[830,1088],[867,1303],[505,1270],[480,1244],[455,1246],[478,1300],[494,1277],[488,1285],[360,1120],[370,1122],[1590,1068],[1595,1066],[1599,1069],[392,1101],[398,1108],[402,1113],[440,1135],[435,1140]].forEach(function (p) {
    var a = (p[0] - OX) >> 1, b = (p[1] - OY) >> 1;
    put(a - 1, b, PALE); put(a + 2, b, PALE); put(a, b - 1, PALE); put(a, b + 1, PALE); put(a, b, TAN); put(a + 1, b, TAN);
  });
  ctx.putImageData(img, 0, 0);
})();
```
